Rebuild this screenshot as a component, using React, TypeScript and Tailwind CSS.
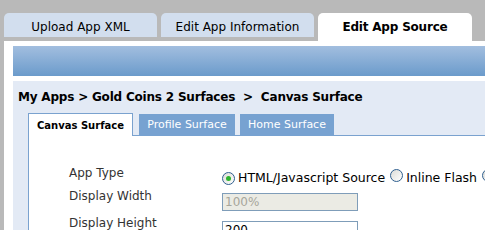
import React from "react";

function Radio({ checked }: { checked?: boolean }) {
  return (
    <span className="relative inline-flex h-[13px] w-[13px] shrink-0 items-center justify-center rounded-full border border-[#2f5f8f] bg-gradient-to-br from-[#dcdcd7] to-white">
      {checked && <span className="h-[5px] w-[5px] rounded-full bg-[#2db42d]" />}
    </span>
  );
}

export default function App() {
  return (
    <div
      className="h-[230px] w-[485px] overflow-hidden bg-[#b9b9b9] pl-[4px] pt-[13px]"
      style={{ fontFamily: '"DejaVu Sans", Verdana, sans-serif' }}
    >
      {/* top tabs */}
      <div className="flex items-start gap-[4px]">
        <div className="flex h-[24px] w-[153px] shrink-0 items-start justify-center rounded-t-[5px] bg-[#d2deee] pt-[7px] text-[12px] leading-[14px] text-black">
          Upload App XML
        </div>
        <div className="flex h-[24px] w-[153px] shrink-0 items-start justify-center rounded-t-[5px] bg-[#d2deee] pt-[7px] text-[12px] leading-[14px] text-black">
          Edit App Information
        </div>
        <div className="flex h-[28px] w-[154px] shrink-0 items-start justify-center rounded-t-[5px] bg-white pt-[7px] text-[12px] font-bold leading-[14px] tracking-[-0.2px] text-black">
          Edit App Source
        </div>
      </div>
      {/* white panel */}
      <div className="bg-white pl-[9px] pt-[5px]">
        <div className="h-[30px] bg-gradient-to-b from-[#a2bedf] to-[#6b9bcb]" />
        <div className="mt-[5px] bg-[#e3eaf5] pl-[15px]">
          <div className="flex h-[32px] items-center text-[12px] font-bold tracking-[-0.2px] text-black">
            <span className="-ml-[10px] whitespace-pre">My Apps &gt; Gold Coins 2 Surfaces  &gt;  Canvas Surface</span>
          </div>
          {/* sub tabs */}
          <div className="flex h-[23px] items-end">
            <div className="flex h-[23px] w-[105px] shrink-0 items-center justify-center border border-b-0 border-[#7aa2cf] bg-white text-[10px] font-bold text-black">
              Canvas Surface
            </div>
            <div className="h-[22px] w-[6px] shrink-0 border-b border-[#7aa2cf]" />
            <div className="flex h-[22px] w-[96px] shrink-0 items-center justify-center bg-[#77a2d1] text-[11px] text-white">
              Profile Surface
            </div>
            <div className="h-[22px] w-[5px] shrink-0 border-b border-[#7aa2cf]" />
            <div className="flex h-[22px] w-[94px] shrink-0 items-center justify-center bg-[#77a2d1] text-[11px] text-white">
              Home Surface
            </div>
            <div className="h-[22px] flex-1 border-b border-[#7aa2cf]" />
          </div>
          {/* content */}
          <div className="h-[100px] overflow-hidden border-l border-[#7aa2cf] bg-white pl-[40px] pt-[30px] text-[12px] text-[#333]">
            <div className="flex h-[14px] items-center">
              <div className="w-[153px] shrink-0 text-[12px] leading-[14px]">App Type</div>
              <div className="flex shrink-0 items-center whitespace-nowrap pt-[10px] text-[12.5px] text-black">
                <Radio checked />
                <span className="ml-[3px]">HTML/Javascript Source</span>
                <span className="ml-[5px]"><Radio /></span>
                <span className="ml-[3px]">Inline Flash</span>
                <span className="ml-[5px]"><Radio /></span>
                <span className="ml-[3px]">Flash</span>
              </div>
            </div>
            <div className="mt-[9px] flex items-start">
              <div className="w-[153px] shrink-0 text-[12px] leading-[14px]">Display Width</div>
              <div className="mt-[4px] flex h-[18px] w-[136px] shrink-0 items-center border border-[#7f9db9] bg-[#ebebe4] px-[2px] text-[12px] text-[#a7a69b]">
                100%
              </div>
            </div>
            <div className="mt-[5px] flex items-start">
              <div className="w-[153px] shrink-0 text-[12px] leading-[14px]">Display Height</div>
              <div className="mt-[5px] flex h-[18px] w-[136px] shrink-0 items-center border border-[#7f9db9] bg-white px-[2px] text-[12px] text-black">
                200
              </div>
            </div>
          </div>
        </div>
      </div>
    </div>
  );
}
